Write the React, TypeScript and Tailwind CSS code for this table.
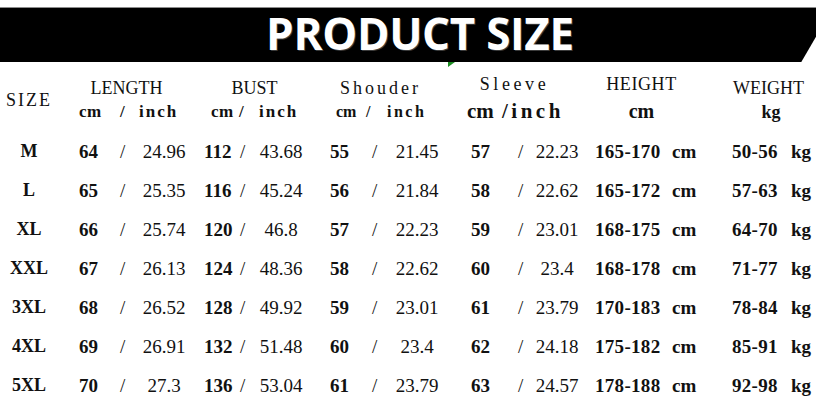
const rows = [
  { size: "M", len: ["64", "24.96"], bust: ["112", "43.68"], sh: ["55", "21.45"], sl: ["57", "22.23"], h: "165-170", w: "50-56" },
  { size: "L", len: ["65", "25.35"], bust: ["116", "45.24"], sh: ["56", "21.84"], sl: ["58", "22.62"], h: "165-172", w: "57-63" },
  { size: "XL", len: ["66", "25.74"], bust: ["120", "46.8"], sh: ["57", "22.23"], sl: ["59", "23.01"], h: "168-175", w: "64-70" },
  { size: "XXL", len: ["67", "26.13"], bust: ["124", "48.36"], sh: ["58", "22.62"], sl: ["60", "23.4"], h: "168-178", w: "71-77" },
  { size: "3XL", len: ["68", "26.52"], bust: ["128", "49.92"], sh: ["59", "23.01"], sl: ["61", "23.79"], h: "170-183", w: "78-84" },
  { size: "4XL", len: ["69", "26.91"], bust: ["132", "51.48"], sh: ["60", "23.4"], sl: ["62", "24.18"], h: "175-182", w: "85-91" },
  { size: "5XL", len: ["70", "27.3"], bust: ["136", "53.04"], sh: ["61", "23.79"], sl: ["63", "24.57"], h: "178-188", w: "92-98" },
];

const cols = "grid grid-cols-[58px_142px_120px_130px_140px_125px_1fr]";

export default function App() {
  return (
    <div
      className="relative w-[816px] h-[409px] overflow-hidden bg-white text-[#111]"
      style={{ fontFamily: '"Liberation Serif", "Times New Roman", serif' }}
    >
      {/* Title banner */}
      <div className="pt-[7px]">
        <div className="flex h-[55px] items-center justify-center border-t border-[#8c8c8c] bg-black pb-[4px] pl-[24px] [clip-path:polygon(0_0,100%_0,100%_54%,98.2%_100%,0_100%)]">
          <h1 className="font-['Open_Sans',sans-serif] text-[44px] font-bold leading-none tracking-[-0.3px] text-white [text-shadow:1px_1px_0_rgba(120,120,120,0.5)]">
            PRODUCT SIZE
          </h1>
        </div>
      </div>
      <svg className="absolute left-[448px] top-[62px]" width="8" height="6" viewBox="0 0 8 6" aria-hidden>
        <path d="M0 0 L7 0 L0 5 Z" fill="#1c8c22" />
      </svg>

      {/* Header row */}
      <div className={`${cols} h-[70px]`}>
        <div className="pt-[26px] text-center text-[18px] leading-[24px] tracking-[2px]">SIZE</div>

        <div className="mt-[14px] flex flex-col">
          <div className="h-[24px] w-[137px] text-center text-[18px] leading-[24px]">LENGTH</div>
          <div className="flex h-[24px] pl-[21px] text-[17px] font-bold leading-[24px]">
            <span className="w-[41px] tracking-[0.5px]">cm</span>
            <span className="w-[19px]">/</span>
            <span className="tracking-[2px]">inch</span>
          </div>
        </div>

        <div className="mt-[14px] flex flex-col">
          <div className="h-[24px] w-[109px] text-center text-[18px] leading-[24px]">BUST</div>
          <div className="flex h-[24px] pl-[11px] text-[17px] font-bold leading-[24px]">
            <span className="w-[28px] tracking-[0.5px]">cm</span>
            <span className="w-[20px]">/</span>
            <span className="tracking-[2px]">inch</span>
          </div>
        </div>

        <div className="mt-[14px] flex flex-col">
          <div className="h-[24px] w-[121px] text-center text-[18px] leading-[24px] tracking-[3px]">Shouder</div>
          <div className="flex h-[24px] pl-[16px] text-[16px] font-bold leading-[24px]">
            <span className="w-[30px]">cm</span>
            <span className="w-[21px]">/</span>
            <span className="tracking-[2.5px]">inch</span>
          </div>
        </div>

        <div className="mt-[8px] flex flex-col">
          <div className="h-[28px] w-[129px] text-center text-[18px] leading-[28px] tracking-[3.6px]">Sleeve</div>
          <div className="flex h-[26px] pl-[17px] text-[21px] font-bold leading-[26px]">
            <span className="w-[35px]">cm</span>
            <span className="tracking-[3.5px]">/inch</span>
          </div>
        </div>

        <div className="mt-[8px] flex flex-col">
          <div className="h-[28px] w-[103px] text-center text-[18px] leading-[28px] tracking-[0.6px]">HEIGHT</div>
          <div className="h-[26px] w-[103px] text-center text-[20px] font-bold leading-[26px]">cm</div>
        </div>

        <div className="mt-[14px] flex flex-col">
          <div className="h-[24px] w-[107px] text-center text-[18px] leading-[24px]">WEIGHT</div>
          <div className="h-[24px] w-[112px] text-center text-[18px] font-bold leading-[24px]">kg</div>
        </div>
      </div>

      {/* Data rows */}
      {rows.map((r) => (
        <div key={r.size} className={`${cols} h-[39px] text-[19px] leading-[39px]`}>
          <div className="text-center text-[18px] font-bold">{r.size}</div>

          <div className="flex pl-[21px]">
            <span className="w-[41px] font-bold">{r.len[0]}</span>
            <span className="w-[16px]">/</span>
            <span className="w-[56px] text-center">{r.len[1]}</span>
          </div>

          <div className="flex pl-[4px]">
            <span className="w-[36px] font-bold">{r.bust[0]}</span>
            <span className="w-[13px]">/</span>
            <span className="w-[56px] text-center">{r.bust[1]}</span>
          </div>

          <div className="flex pl-[10px]">
            <span className="w-[42px] font-bold">{r.sh[0]}</span>
            <span className="w-[17px]">/</span>
            <span className="w-[56px] text-center">{r.sh[1]}</span>
          </div>

          <div className="flex pl-[21px]">
            <span className="w-[47px] font-bold">{r.sl[0]}</span>
            <span className="w-[11px]">/</span>
            <span className="w-[56px] text-center">{r.sl[1]}</span>
          </div>

          <div className="flex pl-[5px] font-bold">
            <span className="w-[77px] tracking-[0.3px]">{r.h}</span>
            <span>cm</span>
          </div>

          <div className="flex pl-[17px] font-bold">
            <span className="w-[59px] tracking-[0.3px]">{r.w}</span>
            <span>kg</span>
          </div>
        </div>
      ))}
    </div>
  );
}
